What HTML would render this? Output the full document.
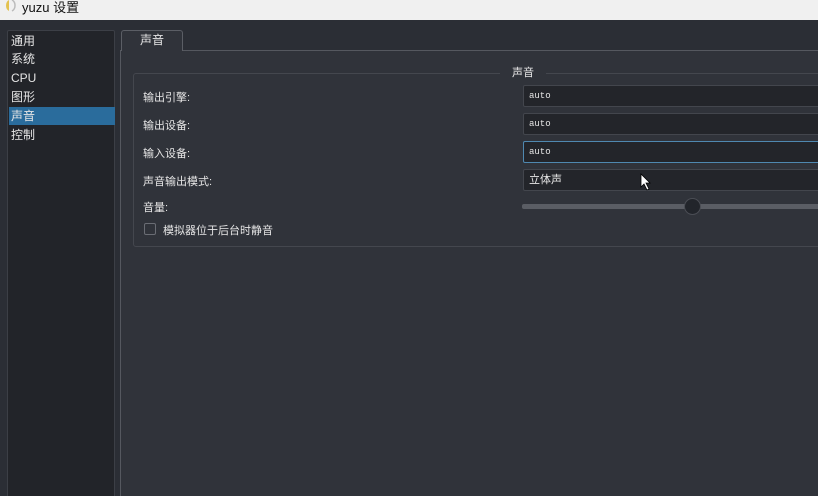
<!DOCTYPE html>
<html><head><meta charset="utf-8"><style>
*{margin:0;padding:0;box-sizing:border-box}
html,body{width:818px;height:496px;overflow:hidden}
body{background:#2b2e35;font-family:"Liberation Sans","Noto Sans CJK SC",sans-serif;font-size:12px;color:#e6e6e6;position:relative}
.a{position:absolute}
.title{left:0;top:0;width:818px;height:20px;background:#f0f0f0;color:#111;font-size:13px;overflow:hidden}
.list{left:7px;top:30px;width:108px;height:470px;background:#222429;border:1px solid #3c3f46;border-radius:2px}
.li{position:absolute;left:1px;width:106px;height:18px;line-height:18px;padding-left:2px;font-size:12px}
.tab{left:121px;top:30px;width:62px;height:21px;background:#30333a;border:1px solid #5b5e65;border-bottom:none;border-radius:3px 3px 0 0;text-align:center;line-height:19px;z-index:2}
.pane{left:120px;top:50px;width:710px;height:460px;background:#30333a;border:1px solid #55585f}
.grp{left:133px;top:73px;width:700px;height:174px;border:1px solid #44474e;border-radius:3px}
.gt{left:500px;top:64px;background:#30333a;padding:0 12px;font-size:11px}
.lab{left:143px;font-size:11px}
.fld{left:523px;width:300px;height:22px;background:#23252a;border:1px solid #43464d;border-radius:2px;font-family:"Liberation Mono",monospace;font-size:9px;line-height:20px;padding-left:5px}
</style></head><body>
<div class="a title"><svg class="a" style="left:3px;top:0" width="14" height="12"><path d="M6 0 A5 6 0 0 0 6 11 Z" fill="#e3c250"/><path d="M9 0 A5 6 0 0 1 9 11" fill="none" stroke="#bbb" stroke-width="1.5"/></svg><span class="a" style="left:22px;top:-3px">yuzu 设置</span></div>
<div class="a list">
<div class="li" style="top:1px">通用</div>
<div class="li" style="top:19px">系统</div>
<div class="li" style="top:38px">CPU</div>
<div class="li" style="top:57px">图形</div>
<div class="li" style="top:76px;background:#2a6c9c">声音</div>
<div class="li" style="top:95px">控制</div>
</div>
<div class="a pane"></div>
<div class="a tab">声音</div>
<div class="a grp"></div>
<div class="a gt">声音</div>
<div class="a lab" style="top:89px">输出引擎:</div>
<div class="a lab" style="top:117px">输出设备:</div>
<div class="a lab" style="top:145px">输入设备:</div>
<div class="a lab" style="top:173px">声音输出模式:</div>
<div class="a lab" style="top:199px">音量:</div>
<div class="a fld" style="top:85px">auto</div>
<div class="a fld" style="top:113px">auto</div>
<div class="a fld" style="top:141px;border-color:#4f88b0">auto</div>
<div class="a fld" style="top:169px;font-family:'Liberation Sans','Noto Sans CJK SC',sans-serif;font-size:11px">立体声</div>
<svg class="a" style="left:640px;top:173px" width="12" height="18"><path d="M1 1 L1 14 L4 11 L7 17 L9 16 L6 10 L10 10 Z" fill="#fff" stroke="#000" stroke-width="0.8"/></svg>
<div class="a" style="left:522px;top:204px;width:300px;height:5px;background:#5a5d64;border-radius:2px"></div>
<div class="a" style="left:684px;top:198px;width:17px;height:17px;background:#22252b;border:1px solid #4a4d54;border-radius:50%"></div>
<div class="a" style="left:144px;top:223px;width:12px;height:12px;border:1px solid #6a6d74;border-radius:2px"></div>
<div class="a" style="left:163px;top:222px;font-size:11px">模拟器位于后台时静音</div>
</body></html>
